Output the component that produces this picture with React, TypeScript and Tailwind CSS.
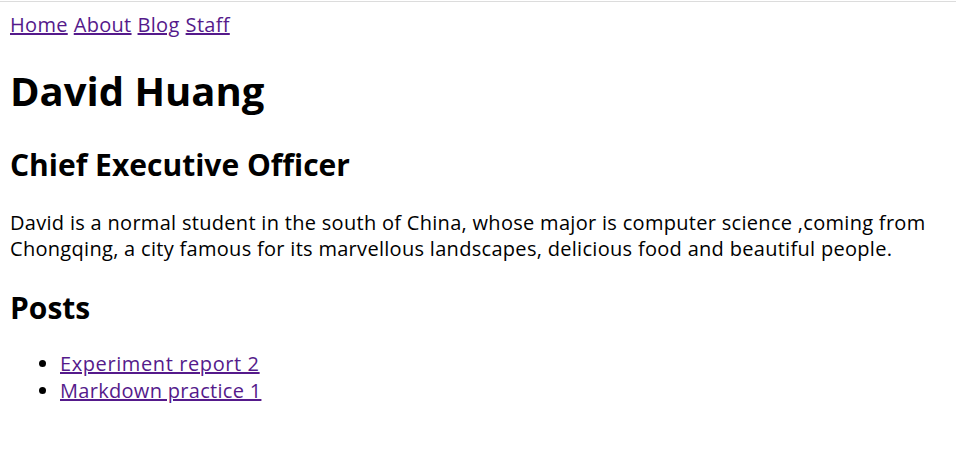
import React from "react";

export default function App() {
  return (
    <div className="relative min-h-[462px] bg-white text-black font-['Open_Sans','Noto_Sans',sans-serif] text-[20px] leading-[1.32] tracking-[0.3px]">
      <div className="absolute left-0 right-0 top-px h-px bg-[#dcdcdc]" />
      <div className="px-[10px] pt-[12px] pb-[10px]">
        <nav className="flex gap-[6px]">
          <a href="#" className="underline text-[#551a8b]">Home</a>
          <a href="#" className="underline text-[#551a8b]">About</a>
          <a href="#" className="underline text-[#551a8b]">Blog</a>
          <a href="#" className="underline text-[#551a8b]">Staff</a>
        </nav>
        <h1 className="mt-[27px] mb-[27px] text-[40px] font-bold leading-[1.32] tracking-normal">David Huang</h1>
        <h2 className="mb-[25px] text-[30px] font-bold leading-[1.32] tracking-normal">Chief Executive Officer</h2>
        <p className="mb-[25px]">
          David is a normal student in the south of China, whose major is computer science ,coming from Chongqing, a city famous for its marvellous landscapes, delicious food and beautiful people.
        </p>
        <h2 className="mb-[24px] text-[30px] font-bold leading-[1.32] tracking-normal">Posts</h2>
        <ul className="list-disc pl-[50px]">
          <li><a href="#" className="underline text-[#551a8b] tracking-[0.6px]">Experiment report 2</a></li>
          <li><a href="#" className="underline text-[#551a8b]">Markdown practice 1</a></li>
        </ul>
      </div>
    </div>
  );
}
